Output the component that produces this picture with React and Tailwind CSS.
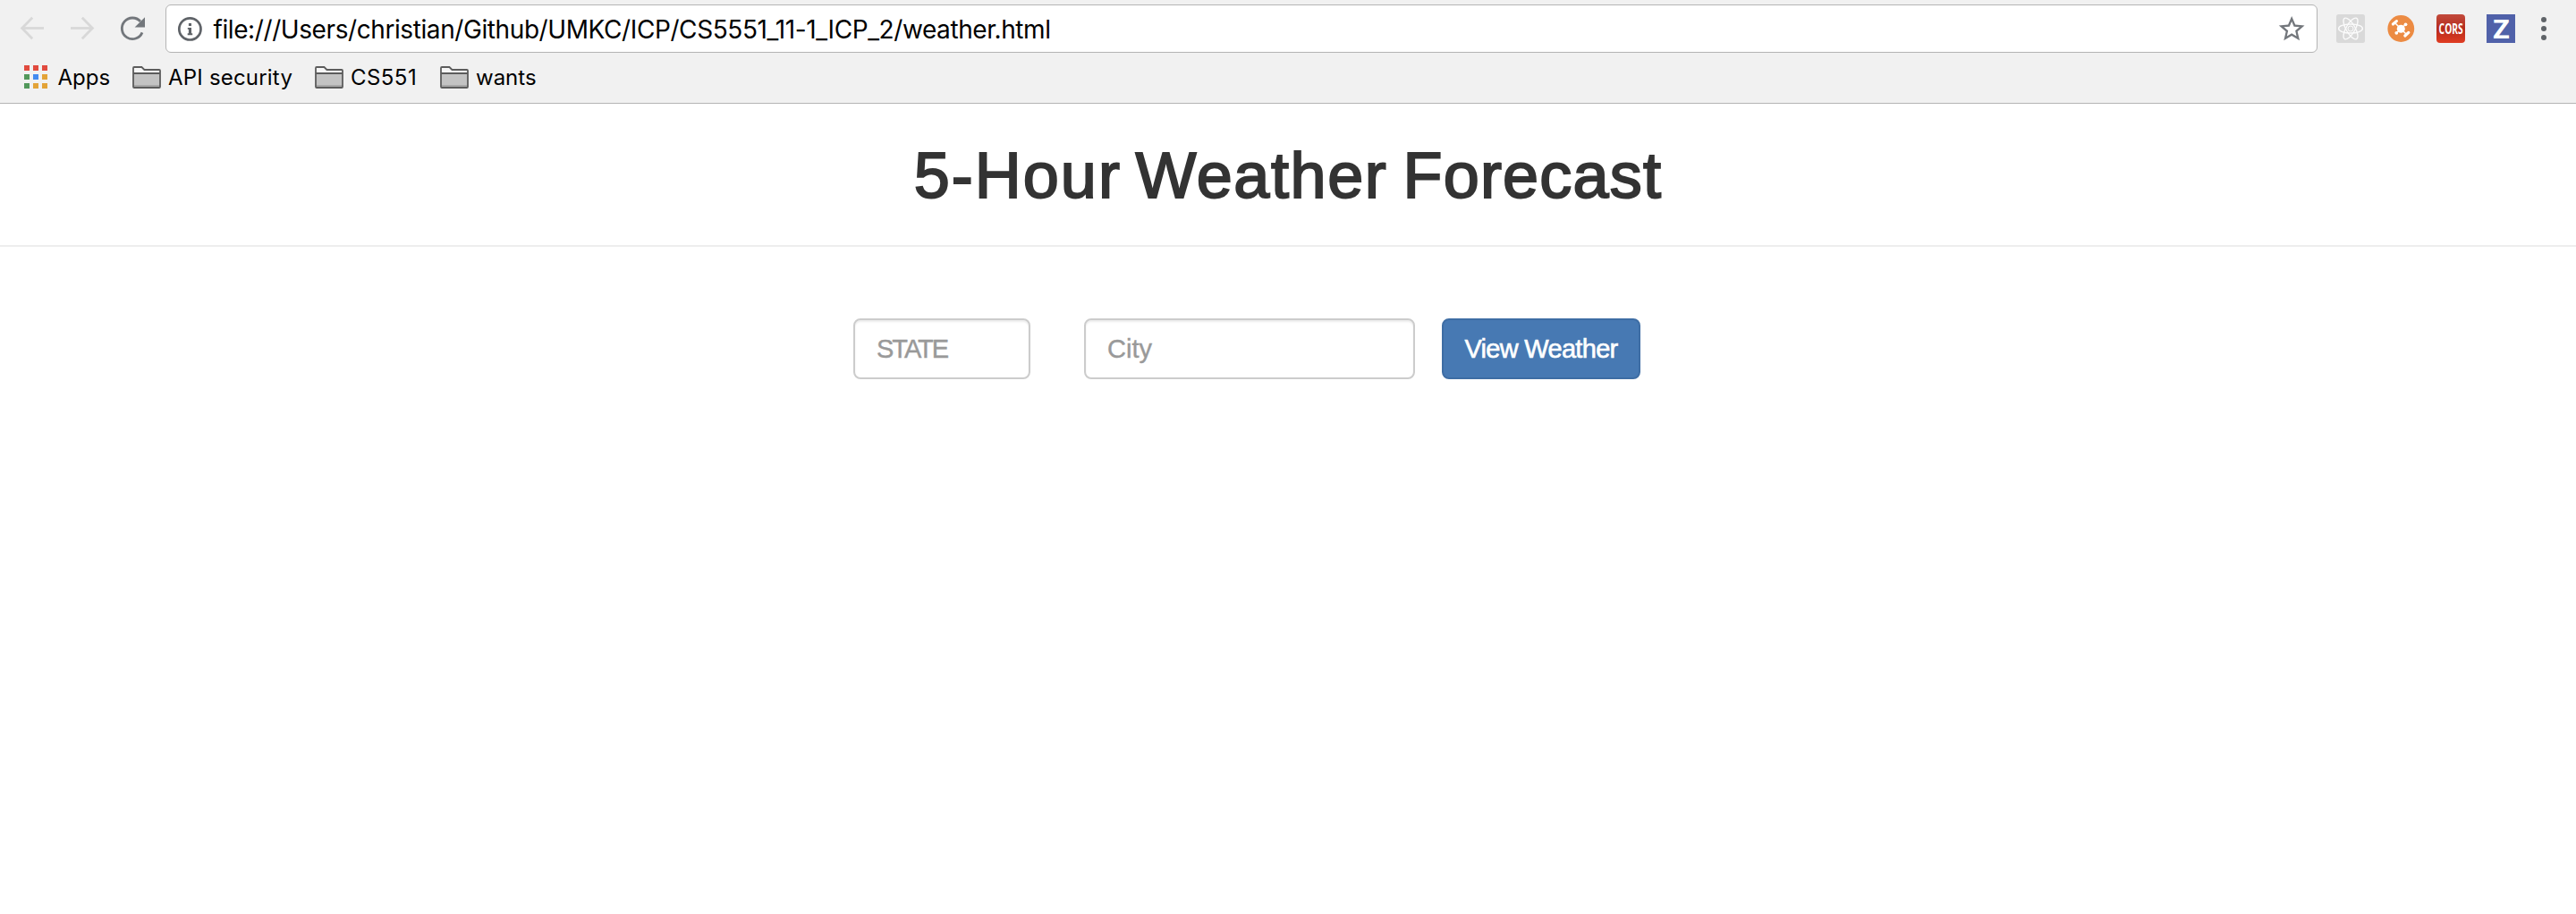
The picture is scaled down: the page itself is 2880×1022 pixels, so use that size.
const APP_DOTS = [
  ["#e14b3f", "#e14b3f", "#e14b3f"],
  ["#52985b", "#438bf0", "#e3a338"],
  ["#52985b", "#e3a338", "#e3a338"],
];

function BackIcon({ className }) {
  return (
    <svg className={className} width="32" height="32" viewBox="0 0 32 32" fill="none" stroke="#d8d8d8" strokeWidth="2.8">
      <path d="M29 15.5H5" />
      <path d="M16.2 3.8L4.6 15.5L16.2 27.2" />
    </svg>
  );
}

function ForwardIcon({ className }) {
  return (
    <svg className={className} width="32" height="32" viewBox="0 0 32 32" fill="none" stroke="#d8d8d8" strokeWidth="2.8">
      <path d="M3 15.5H27" />
      <path d="M15.8 3.8L27.4 15.5L15.8 27.2" />
    </svg>
  );
}

function ReloadIcon({ className }) {
  return (
    <svg className={className} width="32" height="32" viewBox="0 0 32 32">
      <path d="M25 8A11.8 11.8 0 1 0 27 20.4" fill="none" stroke="#73777c" strokeWidth="2.8" />
      <path d="M30 3.2V14.6H18.6Z" fill="#73777c" />
    </svg>
  );
}

function InfoIcon() {
  return (
    <svg width="28" height="28" viewBox="0 0 28 28" className="shrink-0">
      <circle cx="14.4" cy="14.4" r="12.1" fill="none" stroke="#5f6368" strokeWidth="2.7" />
      <rect x="12.9" y="8" width="3.1" height="3" fill="#5f6368" />
      <path d="M11.8 12.9H16V19.3H17.2V21.2H11.7V19.3H12.9V14.8H11.8Z" fill="#5f6368" />
    </svg>
  );
}

function StarIcon() {
  return (
    <svg width="30" height="30" viewBox="1.44 1.3 20.9 20.9" className="shrink-0">
      <path
        d="M22 9.24l-7.19-.62L12 2 9.19 8.63 2 9.24l5.46 4.73L5.82 21 12 17.27 18.18 21l-1.63-7.03L22 9.24zM12 15.4l-3.76 2.27 1-4.28-3.32-2.88 4.38-.38L12 6.1l1.71 4.04 4.38.38-3.32 2.88 1 4.28L12 15.4z"
        fill="#73777c"
      />
    </svg>
  );
}

function ReactIcon() {
  return (
    <svg width="32" height="32" viewBox="0 0 32 32" className="shrink-0">
      <rect width="32" height="32" rx="2.5" fill="#d9d9d9" />
      <g fill="none" stroke="#fbfbfb" strokeWidth="1.4">
        <ellipse cx="16" cy="16" rx="13.4" ry="5" />
        <ellipse cx="16" cy="16" rx="13.4" ry="5" transform="rotate(60 16 16)" />
        <ellipse cx="16" cy="16" rx="13.4" ry="5" transform="rotate(120 16 16)" />
      </g>
      <circle cx="16" cy="16" r="3" fill="#d9d9d9" stroke="#fbfbfb" strokeWidth="1" />
    </svg>
  );
}

function HubIcon() {
  return (
    <svg width="32" height="32" viewBox="0 0 32 32" className="shrink-0">
      <circle cx="16.3" cy="16" r="14.9" fill="#ec8b43" />
      <g stroke="#fff" fill="none">
        <path d="M9.5 9.5L22.5 22.5M21.4 11.5L11.3 20.7" strokeWidth="1.5" />
        <path d="M7.4 11L11.4 7.6" strokeWidth="3.2" strokeLinecap="round" />
        <path d="M20.8 24L24.8 20.4" strokeWidth="3.2" strokeLinecap="round" />
      </g>
      <circle cx="16.3" cy="16.2" r="4.5" fill="#fff" />
      <circle cx="21.5" cy="11.3" r="1.9" fill="#fff" />
      <circle cx="11.3" cy="20.8" r="1.9" fill="#fff" />
    </svg>
  );
}

function FolderIcon() {
  return (
    <svg width="32" height="26" viewBox="0 0 32 26" className="shrink-0">
      <path d="M1 24V3Q1 2 2 2H10L13.2 5H30Q31 5 31 6V24Q31 25 30 25H2Q1 25 1 24Z" fill="#f6f6f6" />
      <rect x="1" y="9" width="30" height="16" fill="#c3c3c3" />
      <rect x="1" y="22" width="30" height="2" fill="#a8a8a8" />
      <path d="M1 9H31" stroke="#5c5c5c" strokeWidth="2" />
      <path d="M1 24V3Q1 2 2 2H10.4L13.4 5H30Q31 5 31 6V24Q31 25 30 25H2Q1 25 1 24Z" fill="none" stroke="#5c5c5c" strokeWidth="1.8" />
    </svg>
  );
}

function Folder({ width, spacing, children }) {
  return (
    <div className={`flex shrink-0 items-center gap-2 ${width}`}>
      <FolderIcon />
      <span className={`pt-[2px] ${spacing}`}>{children}</span>
    </div>
  );
}

function BrowserBar() {
  return (
    <header className="h-[116px] border-b border-[#b4b4b4] bg-[#f1f1f1] font-['Inter','Liberation_Sans',sans-serif] text-black">
      <div className="flex h-16 items-center pl-5">
        <BackIcon className="mr-6 shrink-0" />
        <ForwardIcon className="mr-6 shrink-0" />
        <ReloadIcon className="mr-[21px] shrink-0" />
        <div className="mr-[21px] flex h-[54px] w-[2406px] shrink-0 items-center rounded-md border border-[#b4b4b4] bg-white pl-3 pr-[13px]">
          <InfoIcon />
          <span className="ml-[12.5px] flex-1 whitespace-nowrap pt-[2px] text-[28px] leading-8 tracking-[-0.41px]">
            file:///Users/christian/Github/UMKC/ICP/CS5551_11-1_ICP_2/weather.html
          </span>
          <StarIcon />
        </div>
        <div className="flex items-center gap-6">
          <ReactIcon />
          <HubIcon />
          <div className="flex size-8 items-center justify-center rounded-[4px] bg-linear-to-b from-[#c24a3c] via-[#b52a1b] to-[#e03c22]">
            <span className="scale-x-[0.64] pb-px font-['Open_Sans'] text-[16px] font-bold leading-none text-white">CORS</span>
          </div>
          <div className="flex size-8 items-center justify-center bg-[#5061a9]">
            <span className="scale-x-110 font-['Open_Sans'] text-[29px] font-bold leading-8 text-white">Z</span>
          </div>
        </div>
        <div className="ml-[29px] flex flex-col gap-[4px]">
          <i className="size-[6px] rounded-full bg-[#5f6368]" />
          <i className="size-[6px] rounded-full bg-[#5f6368]" />
          <i className="size-[6px] rounded-full bg-[#5f6368]" />
        </div>
      </div>
      <nav className="flex h-11 items-center whitespace-nowrap pl-[27px] text-2xl leading-8">
        <div className="flex w-[121px] shrink-0 items-center gap-[11.5px]">
          <div className="grid shrink-0 grid-cols-3 gap-1">
            {APP_DOTS.flat().map((color, i) => (
              <i key={i} className="size-[6px]" style={{ backgroundColor: color }} />
            ))}
          </div>
          <span className="pt-[2px]">Apps</span>
        </div>
        <Folder width="w-[204px]" spacing="tracking-[0.2px]">API security</Folder>
        <Folder width="w-[140px]" spacing="tracking-[0.45px]">CS551</Folder>
        <Folder width="w-[140px]" spacing="tracking-normal">wants</Folder>
      </nav>
    </header>
  );
}

export default function App() {
  return (
    <div className="min-h-[1022px] w-full bg-white">
      <BrowserBar />
      <main className="font-['Liberation_Sans',Arial,sans-serif]">
        <div className="flex h-40 justify-center border-b-2 border-[#eeeeee] pt-[40px]">
          <h1 className="text-[72px] leading-[80px] tracking-[1.2px] text-[#333333] [-webkit-text-stroke:2px_#333333]">
            <span className="mr-[-5.7px] tracking-[2px]">5-Hour</span>{" "}
            <span className="mr-[-4.2px] tracking-[1.6px]">Weather</span>{" "}
            <span>Forecast</span>
          </h1>
        </div>
        <form className="flex pl-[954px] pt-20 text-[29px] leading-10">
          <div className="mr-[60px] flex h-[68px] w-[198px] items-center rounded-lg border-2 border-[#cccccc] px-6 tracking-[-2px] text-[#999999] shadow-[inset_0_2px_2px_rgba(0,0,0,0.075)] [-webkit-text-stroke:0.4px_#999999]">
            STATE
          </div>
          <div className="mr-[30px] flex h-[68px] w-[370px] items-center rounded-lg border-2 border-[#cccccc] px-6 text-[#999999] shadow-[inset_0_2px_2px_rgba(0,0,0,0.075)] [-webkit-text-stroke:0.4px_#999999]">
            City
          </div>
          <button
            type="button"
            className="h-[68px] w-[222px] whitespace-nowrap rounded-lg border-2 border-[#3e6da4] bg-[#4779b3] tracking-[-0.7px] text-white [-webkit-text-stroke:0.6px_#fff]"
          >
            View Weather
          </button>
        </form>
      </main>
    </div>
  );
}
